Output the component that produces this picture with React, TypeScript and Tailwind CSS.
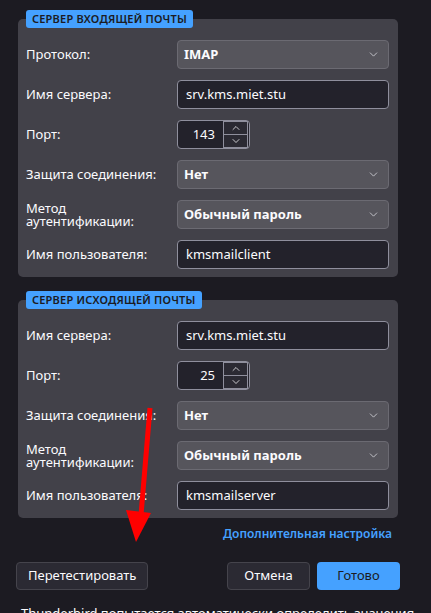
import { ChevronDown, ChevronUp } from "lucide-react";

const font = { fontFamily: '"Noto Sans", "Open Sans", sans-serif' };

function Label({ children }: { children: React.ReactNode }) {
    return <div className="w-[151px] shrink-0 text-[13px] leading-[13px] text-[#fbfbfe]">{children}</div>
}

function Select({ value }: { value: string }) {
    return (
        <div className="flex h-[29px] w-[212px] items-center justify-between rounded-[4px] border border-[#6b6a72] bg-[#56555c] pl-[6px] pr-[8px]">
            <span className="text-[13px] font-bold text-[#fbfbfe]">{value}</span>
            <ChevronDown className="h-[13px] w-[13px] text-[#d6d6dc]" strokeWidth={1.5} />
        </div>
    )
}

function Input({ value }: { value: string }) {
    return (
        <div className="flex h-[29px] w-[212px] items-center rounded-[4px] border border-[#8f8f9d] bg-[#23222b] px-[8px]">
            <span className="text-[13px] text-[#fbfbfe]">{value}</span>
        </div>
    )
}

function Port({ value }: { value: string }) {
    return (
        <div className="flex h-[29px] w-[73px] items-center rounded-[4px] border border-[#8f8f9d] bg-[#23222b] pr-[1px]">
            <span className="flex-1 pr-[8px] text-right text-[13px] text-[#fbfbfe]">{value}</span>
            <div className="flex h-[27px] w-[25px] flex-col">
                <div className="flex flex-1 items-center justify-center border border-[#8f8f9d] bg-[#2b2a33]">
                    <ChevronUp className="h-[12px] w-[12px] text-[#fbfbfe]" strokeWidth={1.5} />
                </div>
                <div className="flex flex-1 items-center justify-center border border-t-0 border-[#8f8f9d] bg-[#2b2a33]">
                    <ChevronDown className="h-[12px] w-[12px] text-[#fbfbfe]" strokeWidth={1.5} />
                </div>
            </div>
        </div>
    )
}

function Row({ label, children }: { label: React.ReactNode; children: React.ReactNode }) {
    return (
        <div className="flex items-center">
            <Label>{label}</Label>
            {children}
        </div>
    )
}

function Section({ title, children }: { title: string; children: React.ReactNode }) {
    return (
        <div className="flex flex-col">
            <div className="relative z-10 ml-[8px] self-start rounded-[3px] bg-[#45a1ff] px-[6px] text-[11px] font-semibold leading-[18px] tracking-[0.2px] text-[#1c1b22]">
                {title}
            </div>
            <div className="-mt-[9px] flex w-[380px] flex-col gap-[11px] rounded-[5px] bg-[#424149] pb-[8px] pl-[8px] pt-[21px]">
                {children}
            </div>
        </div>
    )
}

export default function App() {
    return (
        <div className="relative h-[613px] w-[431px] overflow-hidden bg-[#1c1b22] pl-[18px] pt-[10px]" style={font}>
            <Section title="СЕРВЕР ВХОДЯЩЕЙ ПОЧТЫ">
                <Row label="Протокол:"><Select value="IMAP" /></Row>
                <Row label="Имя сервера:"><Input value="srv.kms.miet.stu" /></Row>
                <Row label="Порт:"><Port value="143" /></Row>
                <Row label="Защита соединения:"><Select value="Нет" /></Row>
                <Row label={<>Метод<br />аутентификации:</>}><Select value="Обычный пароль" /></Row>
                <Row label="Имя пользователя:"><Input value="kmsmailclient" /></Row>
            </Section>
            <div className="h-[14px]" />
            <Section title="СЕРВЕР ИСХОДЯЩЕЙ ПОЧТЫ">
                <Row label="Имя сервера:"><Input value="srv.kms.miet.stu" /></Row>
                <Row label="Порт:"><Port value="25" /></Row>
                <Row label="Защита соединения:"><Select value="Нет" /></Row>
                <Row label={<>Метод<br />аутентификации:</>}><Select value="Обычный пароль" /></Row>
                <Row label="Имя пользователя:"><Input value="kmsmailserver" /></Row>
            </Section>
            <div className="flex w-[374px] justify-end pt-[7px]">
                <span className="text-[12px] font-semibold text-[#45a1ff]">Дополнительная настройка</span>
            </div>
            <div className="-ml-[2px] mt-[19px] flex w-[384px] items-center">
                <button className="h-[28px] rounded-[4px] border border-[#45444c] bg-[#2b2a33] px-[11px] text-[13px] text-[#fbfbfe]">Перетестировать</button>
                <div className="flex-1" />
                <button className="h-[28px] w-[83px] rounded-[4px] border border-[#45444c] bg-[#2b2a33] text-[13px] text-[#fbfbfe]">Отмена</button>
                <button className="ml-[7px] h-[28px] w-[83px] rounded-[4px] bg-[#45a1ff] text-[13px] text-[#1c1b22]">Готово</button>
            </div>
            <div className="mt-[14px] whitespace-nowrap pl-[3px] text-[13px] text-[#fbfbfe]">Thunderbird попытается автоматически определить значения</div>
            <svg className="absolute left-0 top-0" width="431" height="613" viewBox="0 0 431 613">
                <line x1="150" y1="408" x2="141" y2="515" stroke="#ff0000" strokeWidth="5" />
                <polygon points="126,510 151,513 136,542" fill="#ff0000" />
            </svg>
        </div>
    );
}
